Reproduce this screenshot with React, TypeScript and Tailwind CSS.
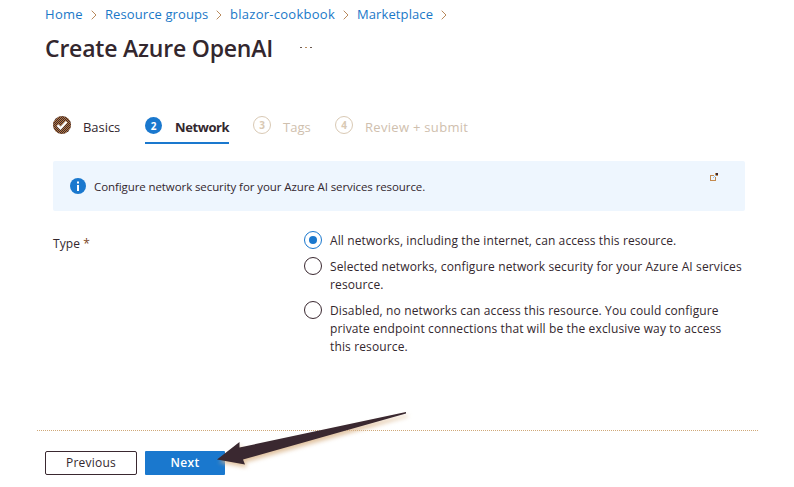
import type { ReactNode } from 'react';

function Chevron() {
  return (
    <svg className="mt-[5px] h-[10px] w-[6px] shrink-0" viewBox="0 0 6 10" fill="none" stroke="#b98a5c" strokeWidth="1">
      <path d="M.7.7 5 5 .7 9.3" />
    </svg>
  );
}

function Crumb({ children, className }: { children: ReactNode; className: string }) {
  return (
    <a className={`flex shrink-0 justify-between whitespace-nowrap text-[#1a78c8] ${className}`}>
      <span>{children}</span>
      <Chevron />
    </a>
  );
}

function StepBadge({ children, active = false }: { children: ReactNode; active?: boolean }) {
  return (
    <span
      className={`flex shrink-0 items-center justify-center rounded-full text-[10px] leading-none font-bold ${
        active
          ? 'mt-px mr-px h-[17px] w-[17px] bg-[#1a78ce] text-white'
          : 'h-[18px] w-[18px] border border-[#d9c9b4] text-[#d9c9b4]'
      }`}
    >
      {children}
    </span>
  );
}

// Single-pixel checks that cover the badge, one cell in two.
const weave = Array.from({ length: 18 * 18 }, (_, i) => [i % 18, Math.floor(i / 18)])
  .filter(([x, y]) => (x + y) % 2 === 0)
  .map(([x, y]) => `M${x} ${y}h1v1h-1z`)
  .join('');

function CheckBadge() {
  return (
    <svg className="h-[18px] w-[18px] shrink-0" viewBox="0 0 18 18">
      <clipPath id="badge">
        <circle cx="9" cy="9" r="9" />
      </clipPath>
      <g clipPath="url(#badge)">
        <rect width="18" height="18" fill="#3a2830" />
        <path d={weave} fill="#b97a3e" />
      </g>
      <path d="m4.5 9.2 3 3 6-6.4" fill="none" stroke="#fff" strokeWidth="2.4" />
    </svg>
  );
}

function Radio({ checked = false }: { checked?: boolean }) {
  return (
    <span
      className={`flex h-[18px] w-[18px] shrink-0 items-center justify-center rounded-full border ${
        checked ? 'border-[#1a78ce]' : 'border-[#3a2830]'
      }`}
    >
      {checked && <span className="h-2 w-2 rounded-full bg-[#1a78ce]" />}
    </span>
  );
}

export default function App() {
  return (
    <main className="relative h-[487px] w-[794px] overflow-hidden bg-white font-['Open_Sans','Noto_Sans',sans-serif] text-[12px] text-[#33272e]">
      <nav className="flex h-[28px] pt-[5px] pl-[45px] text-[13px] leading-[18px]">
        <Crumb className="mr-[8px] w-[52px] tracking-[0.3px]">Home</Crumb>
        <Crumb className="mr-[8px] w-[117px] tracking-[0.1px]">Resource groups</Crumb>
        <Crumb className="mr-[8px] w-[119px] tracking-[0.27px]">blazor-cookbook</Crumb>
        <Crumb className="w-[90px] tracking-[0.1px]">Marketplace</Crumb>
      </nav>

      <header className="flex h-[40px] items-center pl-[45px]">
        <h1 className="-mt-px w-[255px] text-[23px] leading-[30px] font-semibold tracking-[-0.2px] whitespace-nowrap">
          Create Azure OpenAI
        </h1>
        <span className="-mt-px flex gap-[3px]">
          <i className="h-[1px] w-[2px] bg-[#6b5a52]" />
          <i className="h-[1px] w-[2px] bg-[#b98a5c]" />
          <i className="h-[1px] w-[2px] bg-[#6b5a52]" />
        </span>
      </header>

      <div className="mt-[44px] flex h-[49px] pl-[53px] text-[13px] leading-[20px]">
        <div className="flex w-[92px] pt-[4px]">
          <CheckBadge />
          <span className="mt-px ml-[12px] tracking-[-0.05px]">Basics</span>
        </div>
        <div className="flex h-[32px] w-[84px] border-b-2 border-[#1a78ce] pt-[4px]">
          <StepBadge active>2</StepBadge>
          <span className="mt-px ml-[12px] font-bold tracking-[-0.4px]">Network</span>
        </div>
        <div className="ml-[24px] flex w-[82px] pt-[4px] text-[#cfc0ae]">
          <StepBadge>3</StepBadge>
          <span className="mt-px ml-[12px]">Tags</span>
        </div>
        <div className="flex pt-[4px] text-[#cfc0ae]">
          <StepBadge>4</StepBadge>
          <span className="mt-px ml-[12px] tracking-[0.3px] whitespace-nowrap">Review + submit</span>
        </div>
      </div>

      <section className="ml-[53px] flex h-[50px] w-[692px] rounded-[2px] bg-[#eef6fe] pl-[17px]">
        <svg className="mt-[17px] h-4 w-4" viewBox="0 0 16 16">
          <circle cx="8" cy="8" r="8" fill="#1a78ce" />
          <path d="M7 7h2v6H7zM7 3.5h2v2H7z" fill="#fff" />
        </svg>
        <p className="mt-[17px] ml-[8px] w-[616px] text-[11.5px] leading-[18px] tracking-[-0.09px]">
          Configure network security for your Azure AI services resource.
        </p>
        <svg className="mt-[12px] h-[8px] w-[8px]" viewBox="0 0 8 8" shapeRendering="crispEdges">
          <path d="M4 2.500H.5v5h5V4" fill="none" stroke="#c48a4e" />
          <path d="M3 5 6 2" stroke="#9bc6e6" />
          <path d="M5 0h3v3H6V2H5z" fill="#c48a4e" />
          <path d="M6 0h2v2H6z" fill="#3a2830" />
        </svg>
      </section>

      <section className="mt-[20px] flex h-[199px] pl-[53px]">
        <div className="w-[251px] pt-[4px] leading-[18px] tracking-[0.1px]">
          Type <span className="text-[#7a4525]">*</span>
        </div>
        <div className="flex flex-col gap-[8px] leading-[18px] tracking-[0.13px] whitespace-nowrap">
          <label className="flex gap-[8px]">
            <Radio checked />
            <span className="mt-px -mb-px tracking-[0.11px]">
              All networks, including the internet, can access this resource.
            </span>
          </label>
          <label className="flex gap-[8px]">
            <Radio />
            <span className="mt-px -mb-px">
              Selected networks, configure network security for your Azure AI services
              <br />
              resource.
            </span>
          </label>
          <label className="flex gap-[8px]">
            <Radio />
            <span className="mt-px -mb-px">
              Disabled, no networks can access this resource. You could configure
              <br />
              private endpoint connections that will be the exclusive way to access
              <br />
              this resource.
            </span>
          </label>
        </div>
      </section>

      <footer className="ml-[37px] w-[721px] border-t border-dotted border-[#cfa878] pt-[20px] pl-[8px]">
        <div className="flex gap-[8px]">
          <button className="h-[24px] w-[92px] rounded-[2px] border border-[#3a2830] text-[12px] leading-[22px] tracking-[0.2px]">
            Previous
          </button>
          <button className="h-[24px] w-[80px] rounded-[1px] bg-[#1a78ce] text-[12px] leading-[24px] font-semibold tracking-[0.3px] text-white">
            Next
          </button>
        </div>
      </footer>

      <svg className="absolute top-[400px] left-[205px] h-[80px] w-[215px]" viewBox="205 400 215 80">
        <path
          d="M217 459.500 239.500 442V447.500L406 412V413.500L243 459.500 245 464.500Z"
          fill="#3a2830"
          className="drop-shadow-[2px_3px_2px_#d9b48acc]"
        />
      </svg>
    </main>
  );
}
